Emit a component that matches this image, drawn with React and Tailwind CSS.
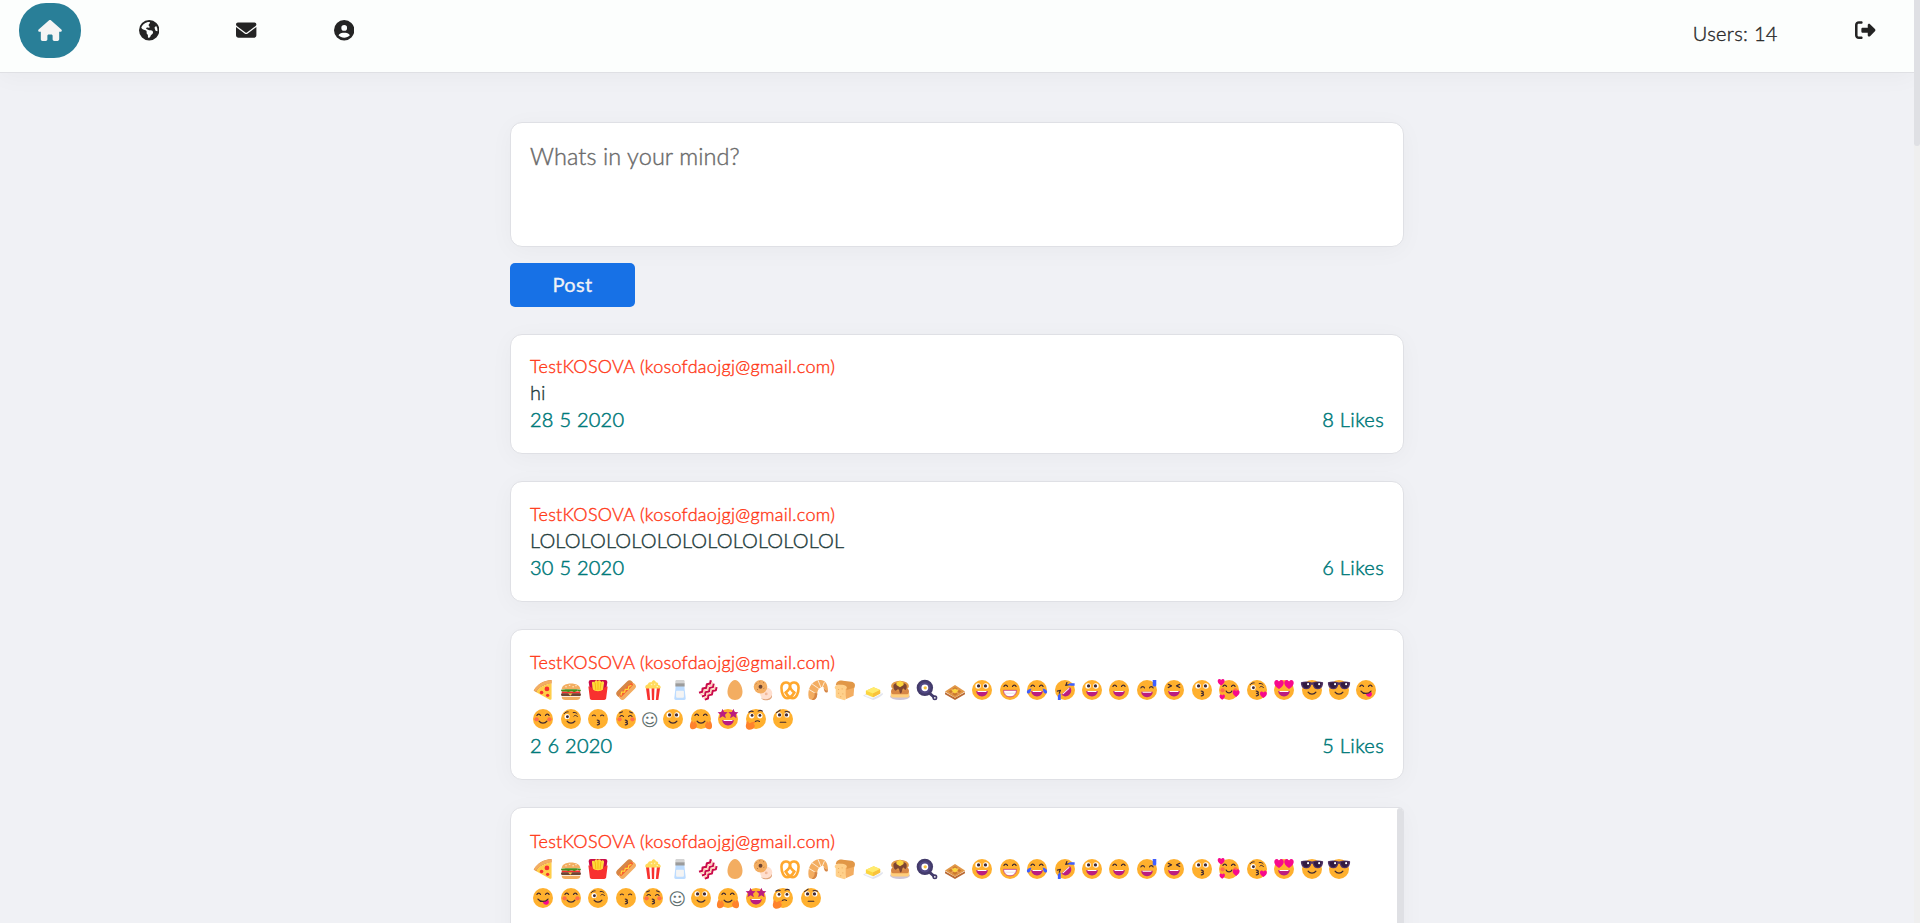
import React from "react";
import { FaHouse, FaEarthAmericas, FaEnvelope, FaCircleUser, FaRightFromBracket } from "react-icons/fa6";

const INK = "#402a32";
const PINK = "#f70a8d";
const PLUM = "#bb1d80";

const Face = () => <circle cx="16" cy="16" r="14" fill="#ffb02e" />;
const Line = ({ d, w = 1.7, c = INK }) => (
  <path d={d} fill="none" stroke={c} strokeWidth={w} strokeLinecap="round" strokeLinejoin="round" />
);
const Happy = ({ y = 0 }) => (
  <g transform={`translate(0 ${y})`}>
    <Line d="M7.5 11c.9-2.3 4.1-2.3 5 0M19.5 11c.9-2.3 4.1-2.3 5 0" />
  </g>
);
const BigEyes = ({ s = 3.9 }) => (
  <g>
    <circle cx="10.5" cy="10.3" r={s} fill="#fff" />
    <circle cx="21.5" cy="10.3" r={s} fill="#fff" />
    <circle cx="11.2" cy="10.3" r="2.3" fill={INK} />
    <circle cx="20.8" cy="10.3" r="2.3" fill={INK} />
  </g>
);
const Laugh = () => (
  <g>
    <path d="M8 17.500h16c0 4.300-3.400 7.500-8 7.500s-8-3.200-8-7.500z" fill={PLUM} />
    <path d="M9.500 17.500h13v.3c0 .6-.6 1-1.300 1h-10.400c-.7 0-1.300-.4-1.300-1z" fill="#fff" />
  </g>
);
const Smile = () => <Line d="M10.500 19c2.500 3.600 8.500 3.600 11 0" />;
const Kiss = () => <Line d="M15 17.500c3.600 0 3.600 3.300.6 3.300c3.400 0 3.400 3.400-.6 3.400" w={1.800} />;
const Blush = () => (
  <g fill="#ff6f47">
    <circle cx="7" cy="16.500" r="3" />
    <circle cx="25" cy="16.500" r="3" />
  </g>
);
const Wink = () => (
  <g>
    <circle cx="10.500" cy="12.500" r="3.600" fill="#fff" />
    <circle cx="11" cy="12.800" r="2" fill={INK} />
    <Line d="M6.500 8.500c1.500-2 3.500-2.700 5.500-2.500M20 12c1.200-1.600 3.500-1.600 5 .6M19 7c2-.6 4.200 0 5.500 1.600" w={1.400} />
  </g>
);
const Heart = ({ x, y, s = 1 }) => (
  <path
    transform={`translate(${x} ${y}) scale(${s})`}
    d="M0 5C-4 2.500-5.500 0-5-2.500C-4.400-5.200-1.300-5.500 0-3C1.300-5.500 4.400-5.200 5-2.500C5.500 0 4 2.500 0 5z"
    fill={PINK}
  />
);
const Hands = () => (
  <g fill="#ff822d">
    <path d="M2 20c1-2 2.200-1.500 2.500 0l.5 1.500c2-3 4-2 3.500 0c2 1 2.500 4 1 6.500c-2 3-7 3-8.500.5c-1-2-.6-5 1-8.500z" />
    <path d="M30 20c-1-2-2.200-1.500-2.500 0l-.5 1.500c-2-3-4-2-3.500 0c-2 1-2.500 4-1 6.500c2 3 7 3 8.500.5c1-2 .6-5-1-8.500z" />
  </g>
);
const Star = ({ x }) => (
  <path
    transform={`translate(${x} 8.500)`}
    d="M0-7L2-2.200L7-2L3.300 1.400L4.500 6.300L0 3.700L-4.500 6.300L-3.300 1.400L-7-2L-2-2.200z"
    fill={PLUM}
  />
);

const ART = {
  pizza: (
    <g>
      <path d="M3 17C8 8 17 2.500 28 2v5C19 8 11 12 7 19z" fill="#d68645" />
      <path d="M28 2.500v4C19 7.500 10 12 6 18.500l-3-2C8 8 17 3 28 2.500z" fill="#f3ad61" />
      <path d="M28 7v20.500c0 2-1 2.500-2.500 2L6.500 19C11 12 19 8 28 7z" fill="#ffce4a" />
      <circle cx="21.500" cy="14.500" r="3.300" fill="#f8312f" />
      <circle cx="14" cy="19.500" r="2.500" fill="#f8312f" />
      <circle cx="22.500" cy="23.500" r="2.300" fill="#f8312f" />
    </g>
  ),
  burger: (
    <g>
      <path d="M3 15C3 10 9 7 16 7s13 3 13 8z" fill="#f3ad61" />
      <path d="M8 11.500h2M13 9.500h2M18 11.500h2M22 10h2" stroke="#fff3d8" strokeWidth="1.400" />
      <rect x="3" y="18" width="26" height="3" fill="#f8312f" />
      <path d="M2 16c0-1.500 28-1.500 28 0s-2 3-4 1.500s-4 3-7 1s-5 1.500-8 0s-9 1-9-2.500z" fill="#44911b" />
      <rect x="2" y="20.500" width="28" height="4" rx="2" fill="#6d4534" />
      <path d="M3 25.500h26c0 3-2 4.500-5 4.500H8c-3 0-5-1.500-5-4.500z" fill="#f3ad61" />
      <path d="M12 21l6 0l-3 3z" fill="#ffce4a" />
    </g>
  ),
  fries: (
    <g>
      <path d="M3 5c0-2 1-3 3-3h20c2 0 3 1 3 3l-2 14H5z" fill="#ca0b4a" />
      <path d="M7.500 6c0-2 3-2 3.500 0c0-4 4-5 4.500-1.500C16.500 1 20 2 20.500 5c1-2 4-1 4 1l-2 13H9z" fill="#ffd93b" />
      <path d="M12 6l1 10M16 4v12M20 6l-1 10" stroke="#f3ad00" strokeWidth="1" />
      <path d="M2.500 11c3 0 5 1 6 4c3 3.500 12 3.500 15 0c1-3 3-4 6-4l-2 16c0 2-1 3-3 3h-17c-2 0-3-1-3-3z" fill="#f8312f" />
    </g>
  ),
  hotdog: (
    <g strokeLinecap="round" fill="none">
      <path d="M7.500 21L21 7.500" stroke="#d68645" strokeWidth="10" />
      <path d="M11 25L25 11" stroke="#f3ad61" strokeWidth="9.500" />
      <path d="M9 23L23.500 8.500" stroke="#f8602f" strokeWidth="4.500" />
      <path d="M9 23l1-4l4 0l1-4l4 0l1-4l3-1" stroke="#ffd93b" strokeWidth="1.800" />
    </g>
  ),
  popcorn: (
    <g>
      <path d="M6 12h20l-2.500 18h-15z" fill="#fff" />
      <path d="M6 12h4.500l1.500 18H8.500zM14 12h4l-.5 18h-3zM21.500 12H26l-2.500 18H20z" fill="#f8312f" />
      <path d="M6 14c-2-3 0-5 3-6c0-3 3-3 5-3c2-4 5-3 6 0c3 0 4 2 3 4c3 0 5 3 3 5z" fill="#ffda5b" />
      <path d="M13 8l2 1M19 7l-1 2M21 11l2 0" stroke="#fff3b8" strokeWidth="1.500" />
    </g>
  ),
  salt: (
    <g>
      <path d="M10 10h12l2 18c0 1.500-1 2-2 2H10c-1 0-2-.5-2-2z" fill="#bddcff" />
      <rect x="10.500" y="17" width="11" height="10" rx="1.500" fill="#f4f4f4" />
      <path d="M9.500 4c0-1.500 1-2 2-2h9c1 0 2 .5 2 2v3h-13z" fill="#d3d3d3" />
      <path d="M9.500 6.500h13V11h-13z" fill="#9b9b9b" />
    </g>
  ),
  bacon: (
    <g fill="none" strokeLinejoin="round">
      <path d="M3.500 20l4.500-1.500l.5-4.500l5-1l1-5l4.500-1l1-4.500" stroke="#ca0b4a" strokeWidth="3" />
      <path d="M5.500 22.500l4.500-1.500l.5-4.500l5-1l1-5l4.500-1l1-4.500" stroke="#ffd0ae" strokeWidth="1.600" />
      <path d="M7.500 25l4.500-1.500l.5-4.500l5-1l1-5l4.500-1l1-5" stroke="#ca0b4a" strokeWidth="2.800" />
      <path d="M9.500 27.500l4.500-1.500l.5-4.500l5-1l1-5l4.500-1l1-4.500" stroke="#ffd0ae" strokeWidth="1.600" />
      <path d="M11.500 29.500l4.500-1.500l.5-4.500l5-1l1-5l4.500-1l1-4.500" stroke="#ca0b4a" strokeWidth="2.800" />
    </g>
  ),
  egg: <path d="M16 2c5 0 10.500 8.500 10.500 16.500C26.500 26 22 30 16 30S5.500 26 5.500 18.500C5.500 10.500 11 2 16 2z" fill="#f3ad61" />,
  bagel: (
    <g>
      <circle cx="20.500" cy="21" r="8.500" fill="#ffdfcf" />
      <path d="M13 26c4 5 13 4 15.500-3c1 5-3 7.500-8 7.500c-3.500 0-6.500-1.500-7.500-4.500z" fill="#e0a37a" />
      <circle cx="20.500" cy="21.500" r="2" fill="#f3b99a" />
      <circle cx="12.500" cy="11.500" r="9.500" fill="#f3ad61" />
      <circle cx="12.500" cy="11.500" r="2.700" fill="#6d4534" />
      <path d="M6 8l1-1M8 15l1 1M16 5l1 1M17 14l1-1M11 4.500h1" stroke="#9c6238" strokeWidth="1.300" />
    </g>
  ),
  pretzel: (
    <g fill="none" stroke="#ffa82e" strokeWidth="3.600" strokeLinecap="round">
      <path d="M10 19.500C14 16.500 16 14 16 10.500C16 3.500 4 3.500 4 13C4 20 7 27.500 12 27.500C16 27.500 20 23 22 19.500" />
      <path d="M22 19.500C18 16.500 16 14 16 10.500C16 3.500 28 3.500 28 13C28 20 25 27.500 20 27.500C16 27.500 12 23 10 19.500" />
    </g>
  ),
  croissant: (
    <g>
      <path d="M3 27C1 16 5 4 18 2c7-1 12 5 12 14c-3 1-5-1-6-4c-5-1-8 3-9 8c0 4-1 9-5 10c-3 0-6 0-7-3z" fill="#f3ad61" />
      <path d="M3 15l10 6M7 7l10 7M16 2.500l4 9.500M25 5l-3 7" stroke="#fff0dc" strokeWidth="1.300" />
      <path d="M24 12c1 3 3 5 6 4c0 3-1 4-3 3.500c-2-1-3-4-3-7.500zM10 30c4-1 5-5 5-9l-4-1c1 4 0 7-4 10z" fill="#d68645" />
    </g>
  ),
  bread: (
    <g>
      <path d="M14 12l15-1l-1 13l-11 5z" fill="#f3ad61" />
      <path d="M2 11c2-4 15-5 17-1c1 3-1 4-2 4.500V28c0 2-1 2.500-3 2L6 27.500c-2-.5-3-1-3-3V15c-1-1-2-2-1-4z" fill="#ffd08a" />
      <path d="M7 15v1M12 14v1M7 20v1M13 21v1M10 25v1" stroke="#e19747" strokeWidth="1.300" />
      <path d="M4 6c2-3 6-3.500 9-3l12 1.500c5 1 6 5 4 8.500l-11 3c3-6-4-8.500-15-6.500z" fill="#e19747" />
    </g>
  ),
  butter: (
    <g>
      <path d="M2 24l15-9l13 6c1 2-9 8-14 9z" fill="#e1e4ee" />
      <path d="M4 24l14-8l11 5l-14 7z" fill="#f7f8fb" />
      <path d="M6 17l11-5l9 4v5l-10 5l-10-4z" fill="#fcd53f" />
      <path d="M6 17l11-5l9 4l-10 5z" fill="#ffeb6e" />
      <path d="M16 21l10-5v5l-10 5z" fill="#f9c23c" />
    </g>
  ),
  pancakes: (
    <g>
      <ellipse cx="16" cy="25" rx="14" ry="5" fill="#cdc4d6" />
      <rect x="3" y="18" width="26" height="8.500" rx="4" fill="#ffce7c" />
      <rect x="3.500" y="14" width="25" height="8" rx="4" fill="#d68645" />
      <ellipse cx="16" cy="10.500" rx="12.500" ry="7.500" fill="#e19747" />
      <path d="M7 9c2-4 16-4 18 0c1 3 0 7-1.500 7s-1.500-2-3-2s-1.500 7-3.500 7s-1.500-6-3.500-6s-2 2-3.500 2s-4-4-3-8z" fill="#7d4533" />
      <path d="M11 6l5-3l5 3v3l-5 3l-5-3z" fill="#fcd53f" />
    </g>
  ),
  pan: (
    <g>
      <path d="M19 20l8 7" stroke="#433b6b" strokeWidth="4" strokeLinecap="round" />
      <circle cx="13" cy="13" r="11.500" fill="#433b6b" />
      <circle cx="13" cy="13" r="8" fill="#514884" />
      <circle cx="13" cy="13" r="4.800" fill="#fff" />
      <circle cx="13.500" cy="13" r="2.300" fill="#f9c23c" />
      <circle cx="27" cy="27" r="3.500" fill="#433b6b" />
      <circle cx="27" cy="27" r="1.200" fill="#fff" />
    </g>
  ),
  waffle: (
    <g>
      <path d="M2 19l14 8l14-8v3l-14 8l-14-8z" fill="#b96a35" />
      <path d="M2 18l14-9l14 9l-14 9z" fill="#e19747" />
      <path d="M7 18l9-6l9 6l-9 6z" fill="#c9762f" />
      <path d="M11 15l10 6M21 15l-10 6" stroke="#f3ad61" strokeWidth="1.500" />
      <path d="M11 17l5-3l5 3l-5 4z" fill="#fcd53f" />
    </g>
  ),
  grin: <g><Face /><BigEyes /><Laugh /></g>,
  beam: (
    <g>
      <Face />
      <Happy />
      <path d="M7 16.500h18c0 5.500-3.800 9-9 9s-9-3.500-9-9z" fill="#fff" stroke={PLUM} strokeWidth="1" />
      <path d="M8 20.500h16" stroke="#dcc6d4" strokeWidth=".8" />
    </g>
  ),
  joy: (
    <g>
      <Face />
      <Happy />
      <Laugh />
      <path d="M8 14C3 15 1 18 2 20s5 2 6-6zM24 14c5 1 7 4 6 6s-5 2-6-6z" fill="#3f5fff" />
    </g>
  ),
  rofl: (
    <g>
      <Face />
      <g transform="rotate(-42 16 16)">
        <Line d="M7 10l4 2l-4 2M25 10l-4 2l4 2" />
        <Laugh />
      </g>
      <path d="M10 21v9H6v-5c0-2 2-4 4-4zM20 9.500c1-3 3-3 5-3h4.500v3.500h-5z" fill="#3f5fff" />
    </g>
  ),
  smileOpen: <g><Face /><Happy /><Laugh /></g>,
  sweat: (
    <g>
      <Face />
      <Happy y={2} />
      <g transform="translate(0 1)"><Laugh /></g>
      <path d="M24 2h5v7c0 3-5 3-5 0z" fill="#3f5fff" />
    </g>
  ),
  squint: <g><Face /><Line d="M8 8l4.500 2.200l-4.500 2.300M24 8l-4.500 2.200l4.500 2.300" /><Laugh /></g>,
  kiss: <g><Face /><BigEyes /><Kiss /></g>,
  loving: (
    <g>
      <Face />
      <Blush />
      <Happy />
      <Line d="M12 17.500c1.500 3.500 6.500 3.500 8 0" />
      <Heart x={5} y={5} s={0.95} />
      <Heart x={26} y={21} s={0.95} />
      <Heart x={6.500} y={26} s={0.75} />
    </g>
  ),
  blowKiss: <g><Face /><Wink /><Kiss /><Heart x={25} y={22.500} s={0.95} /></g>,
  heartEyes: <g><Face /><Laugh /><Heart x={9} y={8} s={1.300} /><Heart x={23} y={8} s={1.300} /></g>,
  cool: (
    <g>
      <Face />
      <path d="M.5 5c4-1 10-1.500 15.500.5C21.500 3.500 27.500 4 31.500 5v3c-1 5-3.500 7-7.500 7c-4 0-6-2.500-7-6.500h-2C14 12.500 12 15 8 15C4 15 1.500 13 .5 8z" fill="#533566" />
      <path d="M2.500 6c4-1 8-1 11 .5c0 4-2 7-5.500 7s-5.500-2.500-5.500-7.500zM18.500 6.500c3-1.500 7-1.500 11-.5c0 5-2 7.500-5.500 7.500s-5.500-3-5.500-7z" fill="#321b41" />
      <circle cx="10.500" cy="7.800" r="1.500" fill="#fff" />
      <circle cx="26" cy="7.800" r="1.500" fill="#fff" />
      <Smile />
    </g>
  ),
  yum: (
    <g>
      <Face />
      <Happy />
      <path d="M15.500 21c3 0 5-1 7-3c3 2 2 7-1.500 7.500c-3 .3-5-1.500-5.500-4.500z" fill={PINK} />
      <Line d="M9 17.500c3 4.500 10 4.500 14 0" />
    </g>
  ),
  blush: <g><Face /><Blush /><Happy /><Smile /></g>,
  wink: <g><Face /><Wink /><Smile /></g>,
  kissSmile: <g><Face /><Line d="M8 11.500c1.200-1.300 3.300-1.300 4.500 0M19.500 11.500c1.200-1.300 3.300-1.300 4.500 0" w={1.500} /><Kiss /></g>,
  kissClosed: (
    <g>
      <Face />
      <Blush />
      <Line d="M7.500 12.500c1.500-1.800 3.500-1.800 5 0M19.500 12.500c1.500-1.800 3.500-1.800 5 0M7 7.500l4-1.500M25 7.500L21 6" w={1.500} />
      <Kiss />
    </g>
  ),
  slight: <g><Face /><BigEyes s={3.600} /><Smile /></g>,
  hug: <g><Face /><Happy /><Smile /><Hands /></g>,
  starEyes: <g><Face /><Laugh /><Star x={8.500} /><Star x={23.500} /></g>,
  thinking: (
    <g>
      <Face />
      <circle cx="10" cy="11.500" r="3.700" fill="#fff" />
      <circle cx="21.500" cy="11.500" r="3.700" fill="#fff" />
      <circle cx="10.500" cy="11" r="2" fill={INK} />
      <circle cx="21.500" cy="11" r="2" fill={INK} />
      <Line d="M6 6.500c2-1.500 4-2 6-1M19 5c2-1.500 4-1.500 6 0M15 19.500c2-1.500 4-1.500 6 0" w={1.500} />
      <path d="M3 20c2-1 3 0 3 2c3-1 7-3 9-2c1 1-1 2-3 3c2 0 3 2 2 4c-1 3-4 4-7 4c-4 0-6-3-5-7z" fill="#ff822d" />
    </g>
  ),
  raised: (
    <g>
      <Face />
      <BigEyes s={3.600} />
      <Line d="M7 7l5-3.500M19 6c2-.8 4-.6 6 .5M12 20.500h8" w={1.500} />
    </g>
  ),
};

const MEAL = [
  "pizza", "burger", "fries", "hotdog", "popcorn", "salt", "bacon", "egg", "bagel", "pretzel", "croissant",
  "bread", "butter", "pancakes", "pan", "waffle", "grin", "beam", "joy", "rofl", "grin", "smileOpen", "sweat",
  "squint", "kiss", "loving", "blowKiss", "heartEyes", "cool", "cool", "yum", "blush", "wink", "kissSmile",
  "kissClosed", "text", "slight", "hug", "starEyes", "thinking", "raised",
];

function EmojiText() {
  return (
    <div className="-mt-px flex flex-wrap">
      {MEAL.map((name, i) =>
        name === "text" ? (
          <span key={i} className="h-[29px] w-[20.3px] pt-[4px] text-center font-['DejaVu_Sans'] text-[17px] leading-[27px] text-[#5f7070]">
            ☺
          </span>
        ) : (
          <span key={i} className="h-[29px] w-[27.44px] pl-[3.3px] pt-[6px]">
            <svg viewBox="2 2 28 28" className="h-[20px] w-[20px] overflow-visible">{ART[name]}</svg>
          </span>
        )
      )}
    </div>
  );
}

const shell = "rounded-[12px] border border-[#dfe0e5] bg-white shadow-[0_4px_24px_rgba(0,0,0,0.035)]";

function Post({ children, date, likes, size, pad, scroll }) {
  return (
    <article className={`${shell} ${size} mb-[27px] flex shrink-0 overflow-hidden ${scroll ? "rounded-tr-[5px]" : ""}`}>
      <div className={`min-w-0 flex-1 px-[19px] ${pad}`}>
        <div className="pt-px text-[18px] font-light leading-[26px] tracking-[0.29px] text-[#ff3b1a] [-webkit-text-stroke:0.4px]">
          TestKOSOVA (kosofdaojgj@gmail.com)
        </div>
        {children}
        {date && (
          <div className="flex justify-between text-[20px] font-light leading-[27px] text-[#007a7a] [-webkit-text-stroke:0.5px]">
            <span className="tracking-[0.25px]">{date}</span>
            <span className="tracking-[0.35px]">{likes} Likes</span>
          </div>
        )}
      </div>
      {scroll && <div className="w-[6px] rounded-t-[4px] bg-[#dfe0e4]" />}
    </article>
  );
}

const body = "text-[20px] font-light leading-[27px] tracking-[0.12px] text-[#213a3a] [-webkit-text-stroke:0.35px]";

export default function App() {
  return (
    <div className="flex h-[923px] w-full overflow-hidden bg-[#f0f1f5] font-['Lato',sans-serif]">
      <div className="flex min-w-0 flex-1 flex-col">
        <header className="flex h-[73px] shrink-0 items-start justify-between border-b border-[#dfe0e4] bg-[#fcfefd] pl-[19px] pr-[19px] pt-[3px] text-[#242424] shadow-[0_4px_24px_rgba(0,0,0,0.035)]">
          <nav className="flex gap-[38.4px]">
            <a className="flex h-[55px] w-[62px] items-center justify-center rounded-[27px] bg-[#297f98] text-[#f5f5f5]">
              <FaHouse className="h-[21px] w-[24px]" />
            </a>
            <a className="flex h-[55px] w-[59.2px] items-center justify-center"><FaEarthAmericas className="size-[20.4px]" /></a>
            <a className="flex h-[55px] w-[59.2px] items-center justify-center"><FaEnvelope className="size-[20.4px]" /></a>
            <a className="flex h-[55px] w-[59.2px] items-center justify-center"><FaCircleUser className="size-[20.4px]" /></a>
          </nav>
          <div className="flex">
            <span className="mr-[58px] pt-[17px] text-[20px] font-light leading-[27px] tracking-[0.35px] text-[#2a2a2a] [-webkit-text-stroke:0.4px]">Users: 14</span>
            <a className="flex h-[55px] w-[59.2px] items-center justify-center"><FaRightFromBracket className="size-[20.4px]" /></a>
          </div>
        </header>
        <main className="ml-[510px] flex w-[894px] flex-col pt-[49px]">
          <textarea
            className={`${shell} h-[125px] shrink-0 resize-none px-[19px] pt-[17px] text-[23.5px] font-light leading-[32px] tracking-[0.08px] outline-none [-webkit-text-stroke:0.4px] placeholder:text-[#6a6a6a]`}
            placeholder="Whats in your mind?"
          />
          <button className="mb-[27px] mt-[16px] h-[44px] w-[125px] shrink-0 rounded-[5px] bg-[#1771e6] pb-[3px] text-[20px] tracking-[0.3px] text-[#f0f1f5] [-webkit-text-stroke:0.3px]">
            Post
          </button>
          <Post size="h-[120px]" pad="pt-[17px]" date="28 5 2020" likes={8}><div className={body}>hi</div></Post>
          <Post size="h-[121px]" pad="pt-[18px]" date="30 5 2020" likes={6}><div className={body}>LOLOLOLOLOLOLOLOLOLOLOLOL</div></Post>
          <Post size="h-[151px]" pad="pt-[18px]" date="2 6 2020" likes={5}><EmojiText /></Post>
          <Post size="h-[180px]" pad="pt-[19px]" scroll><EmojiText /></Post>
        </main>
      </div>
      <div className="w-[6px] shrink-0 bg-[#efefef]">
        <div className="h-[146px] rounded-b-[3px] bg-[#dfe0e4]" />
      </div>
    </div>
  );
}
